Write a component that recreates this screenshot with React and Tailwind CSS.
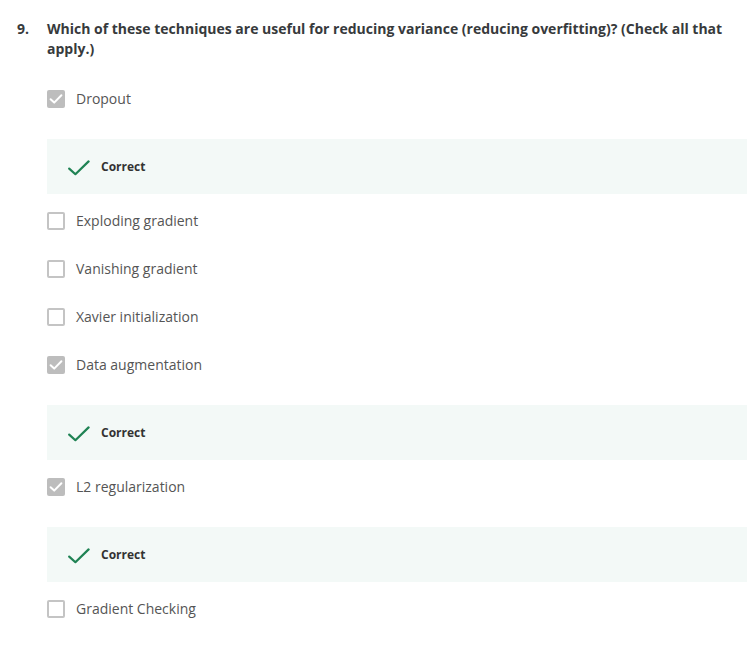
import React from "react";

const options = [
  { label: "Dropout", checked: true },
  { label: "Exploding gradient", checked: false },
  { label: "Vanishing gradient", checked: false },
  { label: "Xavier initialization", checked: false },
  { label: "Data augmentation", checked: true },
  { label: "L2 regularization", checked: true },
  { label: "Gradient Checking", checked: false },
];

function Box({ checked }) {
  if (checked) {
    return (
      <span className="flex h-[18px] w-[18px] shrink-0 items-center justify-center rounded-[2px] bg-[#bdbdbd]">
        <svg width="16" height="16" viewBox="0 0 16 16" fill="none">
          <path d="M2.6 8.2 L6.2 11.6 L13.4 4.2" stroke="#fff" strokeWidth="2" strokeLinecap="round" strokeLinejoin="round" />
        </svg>
      </span>
    );
  }
  return <span className="h-[18px] w-[18px] shrink-0 rounded-[2px] border-2 border-[#c4c4c4] bg-white" />;
}

function Correct() {
  return (
    <div className="mt-[31px] mb-[18px] flex h-[55px] w-[700px] items-center bg-[#f3f9f7] pl-[21px]">
      <svg width="22" height="16" viewBox="0 0 22 16" fill="none" className="mt-[2px]">
        <path d="M1.2 8.6 L7.4 14.2 L20.6 1.4" stroke="#1f8354" strokeWidth="2.2" strokeLinecap="round" strokeLinejoin="round" />
      </svg>
      <span className="ml-[11px] text-[12px] font-bold text-[#333]">Correct</span>
    </div>
  );
}

export default function App() {
  return (
    <div className="min-h-[653px] w-[754px] bg-white pt-[19px] font-['Open_Sans',sans-serif]">
      <div className="flex text-[14px] font-bold leading-[20px] text-[#373a3c]">
        <span className="w-[47px] shrink-0 pl-[17px]">9.</span>
        <span className="pr-[20px]">
          Which of these techniques are useful for reducing variance (reducing overfitting)? (Check all that apply.)
        </span>
      </div>
      <div className="mt-[31px] pl-[47px]">
        {options.map((o, i) => (
          <div key={i}>
            <div className="flex h-[18px] items-center">
              <Box checked={o.checked} />
              <span className="ml-[11px] text-[14px] leading-[20px] text-[#555]">{o.label}</span>
            </div>
            {o.checked ? <Correct /> : i < options.length - 1 ? <div className="h-[30px]" /> : null}
          </div>
        ))}
      </div>
    </div>
  );
}
